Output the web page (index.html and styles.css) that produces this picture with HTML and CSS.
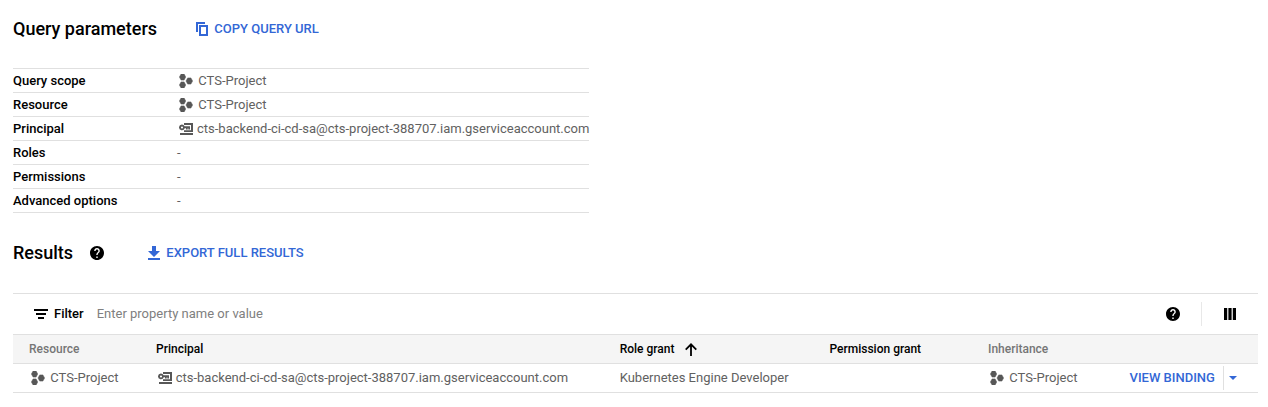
FILE: index.html
```html
<!DOCTYPE html>
<html lang="en">
<head>
<meta charset="utf-8">
<title>Policy analyzer</title>
<link rel="stylesheet" href="styles.css">
</head>
<body>
<svg class="defs" width="0" height="0" aria-hidden="true">
  <symbol id="project" viewBox="0 0 14 14">
    <path d="M2.1 0h3l1.6 3-1.6 3.1h-3L.4 3zM2.1 7.9h3L6.7 11l-1.6 3h-3L.4 11zM8.7 3.9h3.2L13.6 7l-1.7 3.1H8.7L7 7z" stroke="currentColor" stroke-width=".5" stroke-linejoin="round"/>
  </symbol>
  <symbol id="account" viewBox="0 0 14 12">
    <path d="M5 0h9v9H5V7.3h7V2H5zM1 10h13v2H1z"/>
    <path fill-rule="evenodd" d="M3 1.5a2.9 2.9 0 0 1 2.6 1.7H11v3.3H9.3V5.2h-.6v1.3H7V5.2H5.7A2.9 2.9 0 1 1 3 1.5zm0 1.9a1.1 1.1 0 1 0 0 2.2 1.1 1.1 0 0 0 0-2.2z"/>
  </symbol>
  <symbol id="help" viewBox="2 2 20 20">
    <path d="M12 2C6.48 2 2 6.48 2 12s4.48 10 10 10 10-4.48 10-10S17.52 2 12 2zm1 17h-2v-2h2v2zm2.07-7.75l-.9.92C13.45 12.9 13 13.5 13 15h-2v-.5c0-1.1.45-2.1 1.17-2.83l1.24-1.26c.37-.36.59-.86.59-1.41 0-1.1-.9-2-2-2s-2 .9-2 2H8c0-2.21 1.79-4 4-4s4 1.79 4 4c0 .88-.36 1.68-.93 2.25z"/>
  </symbol>
</svg>
<main class="page">
  <header class="heading heading-query">
    <h2>Query parameters</h2>
    <a class="action">
      <svg class="icon-copy" viewBox="0 0 12 14"><path d="M0 0h9v2H2v8H0z"/><path fill-rule="evenodd" d="M3 3h9v11H3zm2 2v7h5V5z"/></svg>
      <span>COPY QUERY URL</span>
    </a>
  </header>

  <dl class="params">
    <div class="param"><dt>Query scope</dt><dd><svg class="icon-project"><use href="#project"/></svg>CTS-Project</dd></div>
    <div class="param"><dt>Resource</dt><dd><svg class="icon-project"><use href="#project"/></svg>CTS-Project</dd></div>
    <div class="param"><dt>Principal</dt><dd><svg class="icon-account"><use href="#account"/></svg>cts-backend-ci-cd-sa@cts-project-388707.iam.gserviceaccount.com</dd></div>
    <div class="param"><dt>Roles</dt><dd>-</dd></div>
    <div class="param"><dt>Permissions</dt><dd>-</dd></div>
    <div class="param"><dt>Advanced options</dt><dd>-</dd></div>
  </dl>

  <header class="heading heading-results">
    <h2>Results</h2>
    <svg class="icon-help"><use href="#help"/></svg>
    <a class="action">
      <svg class="icon-download" viewBox="0 0 12 14"><path d="M4 0h4v5h4L6 11 0 5h4zM0 12h12v2H0z"/></svg>
      <span>EXPORT FULL RESULTS</span>
    </a>
  </header>

  <section class="results">
    <div class="filter">
      <svg class="icon-filter" viewBox="0 0 14 10"><path d="M0 0h14v2H0zM2 4h10v2H2zM4 8h6v2H4z"/></svg>
      <b>Filter</b>
      <span class="placeholder">Enter property name or value</span>
      <div class="tools">
        <svg class="icon-help"><use href="#help"/></svg>
        <span class="divider"></span>
        <svg class="icon-columns" viewBox="0 0 12 12"><path d="M0 0h3.2v12H0zM4.4 0h3.2v12H4.4zM8.8 0H12v12H8.8z"/></svg>
      </div>
    </div>
    <div class="row row-head">
      <span class="muted">Resource</span>
      <span>Principal</span>
      <span>Role grant<svg class="icon-sort" viewBox="0 0 12 13"><path d="M6 13V1.2M.7 6.6L6 1.3l5.3 5.3"/></svg></span>
      <span>Permission grant</span>
      <span class="muted">Inheritance</span>
    </div>
    <div class="row row-body">
      <span><svg class="icon-project"><use href="#project"/></svg>CTS-Project</span>
      <span><svg class="icon-account"><use href="#account"/></svg>cts-backend-ci-cd-sa@cts-project-388707.iam.gserviceaccount.com</span>
      <span>Kubernetes Engine Developer</span>
      <span></span>
      <span><svg class="icon-project"><use href="#project"/></svg>CTS-Project</span>
      <span class="binding"><a>VIEW BINDING</a><span class="split"><svg class="icon-caret" viewBox="0 0 8 4"><path d="M0 0h8L4 4z"/></svg></span></span>
    </div>
  </section>
</main>
</body>
</html>
```
FILE: styles.css
```css
* { box-sizing: border-box; }
body {
  margin: 0;
  background: #fff;
  color: #000;
  font: 400 13px/20px Roboto, sans-serif;
}
svg { display: block; flex: none; fill: currentColor; }
.defs { position: absolute; }
.page { padding: 17px 10px 0 13px; }

.heading { display: flex; align-items: center; height: 24px; }
h2 { margin: 0; font-size: 18px; line-height: 24px; font-weight: 500; }
.heading-query h2 { width: 183px; }
.heading-results h2 { width: 77px; }
.heading-results .icon-help { margin-right: 44px; }
.action { display: flex; align-items: center; gap: 6.3px; color: #3367d6; font-weight: 500; }

.icon-copy, .icon-download { width: 12px; height: 14px; }
.icon-project { width: 14px; height: 14px; color: #575757; }
.icon-account { width: 14px; height: 12px; color: #575757; }
.icon-help { width: 14px; height: 14px; }
.icon-filter { width: 14px; height: 10px; }
.icon-columns { width: 12px; height: 12px; }
.icon-caret { width: 8px; height: 4px; }
.icon-sort { width: 12px; height: 13px; margin-left: 10px; fill: none; stroke: #000; stroke-width: 1.8; }

.params { width: 576px; margin: 27px 0 28px; border-top: 1px solid #e0e0e0; }
.param { display: flex; align-items: center; height: 24px; border-bottom: 1px solid #e0e0e0; }
.param dt { flex: none; width: 164px; font-weight: 500; }
.param dd { display: flex; align-items: center; margin: 0; color: #616161; white-space: nowrap; }
.param .icon-project { margin: 0 5.3px 0 2px; }
.param .icon-account { margin: 0 4px 0 2px; }

.results { margin-top: 28px; border-top: 1px solid #e0e0e0; }
.filter { display: flex; align-items: center; height: 40px; padding: 0 22px 0 21px; }
.filter b { width: 42.7px; margin-left: 6px; font-weight: 500; }
.placeholder { color: #808080; }
.tools { display: flex; align-items: center; margin-left: auto; }
.divider { width: 1px; height: 24px; margin: 0 22px 0 21px; background: #e8e8e8; }

.row {
  display: grid;
  grid-template-columns: 127px 463.7px 209.8px 158.5px 141.5px 1fr;
  align-items: center;
  height: 29px;
  padding-left: 16px;
  border-top: 1px solid #e0e0e0;
  color: #616161;
  white-space: nowrap;
}
.row > span { display: flex; align-items: center; }
.row-head { background: #f5f5f5; color: #000; font-size: 12px; font-weight: 500; }
.row-head .muted { color: #757575; }
.row-body { height: 30px; border-bottom: 1px solid #e0e0e0; }
.row .icon-project { margin: 0 5.3px 0 2px; }
.row .icon-account { margin: 0 3.7px 0 2px; }
.binding { color: #3367d6; }
.binding a { font-weight: 500; }
.split { display: flex; align-items: center; height: 24px; margin-left: 8px; padding-left: 5px; border-left: 1px solid #e0e0e0; }
```
